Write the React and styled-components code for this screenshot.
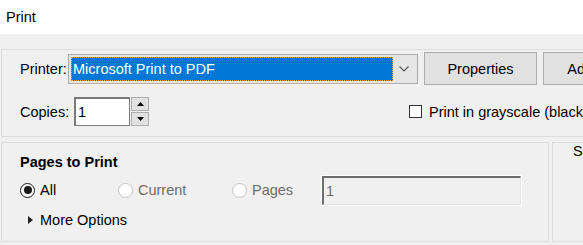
import React from 'react'
import styled, { createGlobalStyle } from 'styled-components'

const Global = createGlobalStyle`
  html, body {
    margin: 0;
    padding: 0;
    background: #f0f0f0;
  }
  body {
    font-family: "Liberation Sans", Arial, sans-serif;
    font-size: 14.5px;
    color: #000;
  }
`

const Window = styled.div`
  width: 583px;
  height: 245px;
  overflow: hidden;
  background: #f0f0f0;
`

const TitleBar = styled.div`
  height: 34px;
  background: #fff;
  display: flex;
  align-items: center;
  padding-left: 6px;
`

const Content = styled.div`
  padding: 15px 0 0 1px;
  display: flex;
  flex-direction: column;
  gap: 5px;
`

const Panel = styled.div`
  border: 1px solid #dcdcdc;
  box-sizing: border-box;
  flex-shrink: 0;
  display: flex;
  flex-direction: column;
`

const TopPanel = styled(Panel)`
  width: 700px;
  padding: 2px 0 0 18px;
  height: 88px;
`

const Row = styled.div`
  display: flex;
  align-items: center;
  gap: ${p => p.$gap || '0'};
  margin-top: ${p => p.$mt || '0'};
  margin-left: ${p => p.$ml || '0'};
`

const Label = styled.span`
  white-space: nowrap;
  width: ${p => p.$w || 'auto'};
  flex-shrink: 0;
`

const Dropdown = styled.div`
  width: 350px;
  height: 30px;
  box-sizing: border-box;
  border: 1px solid #adadad;
  background: #e5e5e5;
  display: flex;
  align-items: stretch;
  padding: 2px;
  flex-shrink: 0;
`

const Selected = styled.div`
  flex: 1;
  background: #0078d7;
  color: #fff;
  border: 1px dotted #e0a050;
  display: flex;
  align-items: center;
  padding-left: 1px;
  white-space: nowrap;
`

const Arrow = styled.div`
  width: 22px;
  display: flex;
  align-items: center;
  justify-content: center;
`

const Button = styled.div`
  width: 113px;
  height: 33px;
  box-sizing: border-box;
  border: 1px solid #adadad;
  background: #e1e1e1;
  display: flex;
  align-items: center;
  justify-content: center;
  flex-shrink: 0;
  white-space: nowrap;
`

const TextBox = styled.div`
  width: ${p => p.$w};
  height: ${p => p.$h};
  box-sizing: border-box;
  border-style: solid;
  border-width: 2px 1px 1px 2px;
  border-color: ${p => (p.$disabled ? '#6d6d6d #e3e3e3 #e3e3e3 #6d6d6d' : '#7a7a7a')};
  background: ${p => (p.$disabled ? '#f0f0f0' : '#fff')};
  color: ${p => (p.$disabled ? '#6d6d6d' : '#000')};
  display: flex;
  align-items: center;
  padding-left: 2px;
  flex-shrink: 0;
  outline: ${p => (p.$disabled ? '1px solid #fff' : 'none')};
`

const Spinner = styled.div`
  display: flex;
  flex-direction: column;
  gap: 1px;
  margin-left: 1px;
`

const SpinButton = styled.div`
  width: 18px;
  height: 14px;
  box-sizing: border-box;
  border: 1px solid #adadad;
  background: #e1e1e1;
  display: flex;
  align-items: center;
  justify-content: center;
`

const Check = styled.div`
  width: 13px;
  height: 13px;
  box-sizing: border-box;
  border: 1px solid #333;
  background: #fff;
  margin-right: 7px;
  flex-shrink: 0;
`

const Bottom = styled.div`
  display: flex;
  gap: 3px;
`

const PagesPanel = styled(Panel)`
  width: 548px;
  height: 100px;
  padding: 7px 0 0 18px;
`

const SidePanel = styled(Panel)`
  width: 200px;
  height: 100px;
  padding: 0 0 0 20px;
  white-space: nowrap;
`

const Heading = styled.div`
  font-weight: 700;
  height: 24px;
  display: flex;
  align-items: center;
`

const RadioRow = styled.div`
  display: flex;
  align-items: center;
  height: 30px;
  margin-top: 1px;
`

const RadioItem = styled.label`
  display: flex;
  align-items: center;
  width: ${p => p.$w};
  color: ${p => (p.$disabled ? '#6d6d6d' : '#000')};
  flex-shrink: 0;
`

const Radio = styled.span`
  width: 15px;
  height: 15px;
  box-sizing: border-box;
  border-radius: 50%;
  border: ${p => (p.$disabled ? '1px solid #c4c4c4' : '1.5px solid #1a1a1a')};
  background: #fff;
  margin-right: 5px;
  display: flex;
  align-items: center;
  justify-content: center;
  &::after {
    content: '';
    display: ${p => (p.$on ? 'block' : 'none')};
    width: 8px;
    height: 8px;
    border-radius: 50%;
    background: #1a1a1a;
  }
`

const More = styled.div`
  display: flex;
  align-items: center;
  height: 29px;
  padding-left: 8px;
`

const Triangle = styled.span`
  width: 0;
  height: 0;
  border-top: 4.5px solid transparent;
  border-bottom: 4.5px solid transparent;
  border-left: 5px solid #222;
  margin-right: 7px;
`

export default function App() {
  return (
    <Window>
      <Global />
      <TitleBar>Print</TitleBar>
      <Content>
        <TopPanel>
          <Row>
            <Label $w="48px">Printer:</Label>
            <Dropdown>
              <Selected>Microsoft Print to PDF</Selected>
              <Arrow>
                <svg width="10" height="6" viewBox="0 0 10 6">
                  <path d="M0.5 0.5 L5 5 L9.5 0.5" fill="none" stroke="#555" strokeWidth="1.1" />
                </svg>
              </Arrow>
            </Dropdown>
            <Row $gap="6px" $ml="6px">
              <Button>Properties</Button>
              <Button>Advanced</Button>
            </Row>
          </Row>
          <Row $mt="12px">
            <Label $w="54px">Copies:</Label>
            <TextBox $w="56px" $h="29px">1</TextBox>
            <Spinner>
              <SpinButton>
                <svg width="7" height="4" viewBox="0 0 7 4"><path d="M0 4 L3.5 0 L7 4 Z" fill="#000" /></svg>
              </SpinButton>
              <SpinButton>
                <svg width="7" height="4" viewBox="0 0 7 4"><path d="M0 0 L3.5 4 L7 0 Z" fill="#000" /></svg>
              </SpinButton>
            </Spinner>
            <Row $ml="260px">
              <Check />
              <Label>Print in grayscale (black and white)</Label>
            </Row>
          </Row>
        </TopPanel>
        <Bottom>
          <PagesPanel>
            <Heading>Pages to Print</Heading>
            <RadioRow>
              <RadioItem $w="98px"><Radio $on />All</RadioItem>
              <RadioItem $w="114px" $disabled><Radio $disabled />Current</RadioItem>
              <RadioItem $w="90px" $disabled><Radio $disabled />Pages</RadioItem>
              <TextBox $w="199px" $h="29px" $disabled>1</TextBox>
            </RadioRow>
            <More><Triangle />More Options</More>
          </PagesPanel>
          <SidePanel>Settings</SidePanel>
        </Bottom>
      </Content>
    </Window>
  )
}
